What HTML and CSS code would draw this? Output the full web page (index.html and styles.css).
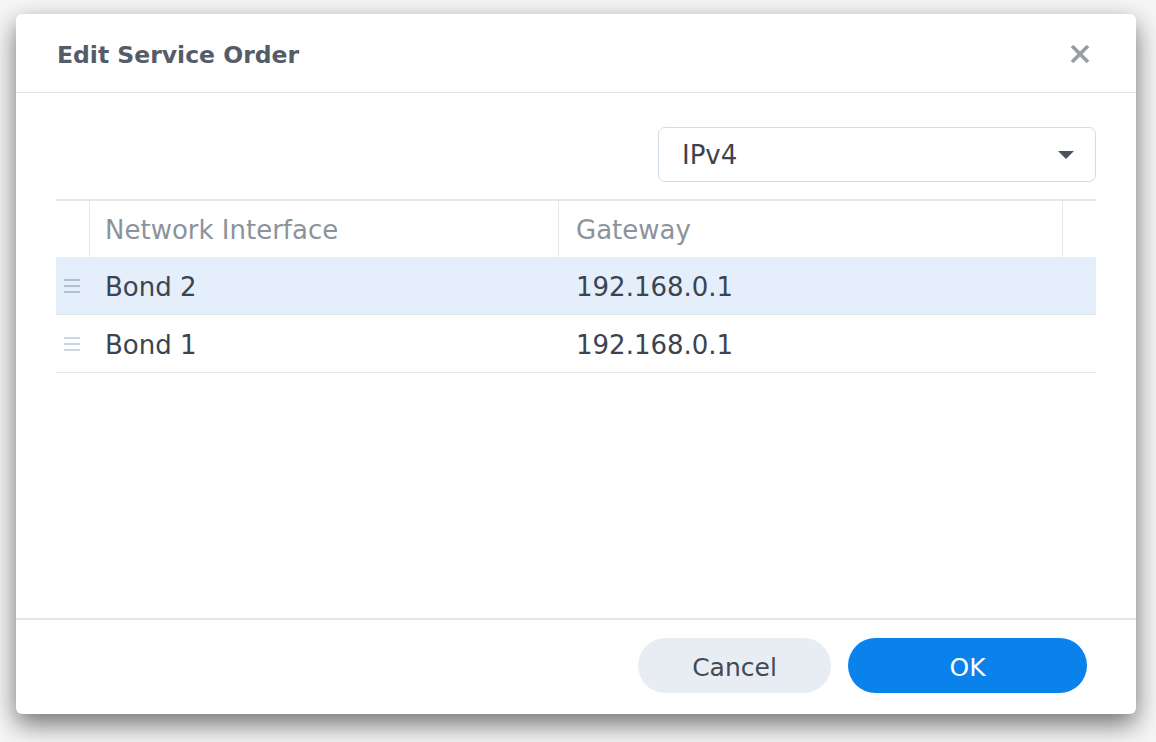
FILE: index.html
```html
<!DOCTYPE html>
<html lang="en">
<head>
<meta charset="utf-8">
<title>Edit Service Order</title>
<link rel="stylesheet" href="styles.css">
</head>
<body>
<div class="dialog">
  <div class="dlg-header">
    <h1 class="dlg-title">Edit Service Order</h1>
    <button class="close-btn" aria-label="Close">
      <svg width="20" height="20" viewBox="0 0 20 20"><path d="M2 2 L18 18 M18 2 L2 18" stroke="#9a9da3" stroke-width="3.6" stroke-linecap="butt" fill="none"/></svg>
    </button>
  </div>
  <div class="dlg-body">
    <div class="toolbar">
      <div class="select">
        <span class="select-value">IPv4</span>
        <svg class="caret" width="16" height="8" viewBox="0 0 16 8"><path d="M0 0 H16 L8 8 Z" fill="#4a5361"/></svg>
      </div>
    </div>
    <div class="grid">
      <div class="grid-row grid-head">
        <div class="cell c-handle"></div>
        <div class="cell c-name sep">Network Interface</div>
        <div class="cell c-gw sep">Gateway</div>
        <div class="cell c-pad sep"></div>
      </div>
      <div class="grid-row selected">
        <div class="cell c-handle"><span class="handle"><i></i><i></i><i></i></span></div>
        <div class="cell c-name">Bond 2</div>
        <div class="cell c-gw">192.168.0.1</div>
        <div class="cell c-pad"></div>
      </div>
      <div class="grid-row">
        <div class="cell c-handle"><span class="handle light"><i></i><i></i><i></i></span></div>
        <div class="cell c-name">Bond 1</div>
        <div class="cell c-gw">192.168.0.1</div>
        <div class="cell c-pad"></div>
      </div>
    </div>
  </div>
  <div class="dlg-footer">
    <button class="btn btn-cancel">Cancel</button>
    <button class="btn btn-ok">OK</button>
  </div>
</div>
</body>
</html>
```
FILE: styles.css
```css
* { box-sizing: border-box; }
html, body { margin: 0; padding: 0; }
body {
  width: 1156px;
  height: 742px;
  background: #f6f6f6;
  font-family: "DejaVu Sans", Verdana, sans-serif;
  overflow: hidden;
  padding: 14px 20px 0 16px;
}
.dialog {
  width: 1120px;
  height: 700px;
  background: #ffffff;
  border-radius: 6px;
  box-shadow: 0 10px 26px rgba(0, 0, 0, 0.55);
  display: flex;
  flex-direction: column;
}
.dlg-header {
  height: 79px;
  flex: none;
  border-bottom: 1px solid #e2e7ec;
  display: flex;
  align-items: center;
  justify-content: space-between;
  padding: 0 46px 0 41px;
}
.dlg-title {
  margin: 0;
  padding-top: 3px;
  font-size: 23.5px;
  font-weight: bold;
  color: #545c67;
}
.close-btn {
  border: 0;
  background: none;
  padding: 0;
  width: 20px;
  height: 20px;
  display: flex;
  margin-top: 1px;
}
.dlg-body {
  flex: 1;
  padding: 34px 40px 0 40px;
}
.toolbar {
  display: flex;
  justify-content: flex-end;
}
.select {
  width: 438px;
  height: 55px;
  border: 1px solid #d2dde7;
  border-radius: 7px;
  display: flex;
  align-items: center;
  justify-content: space-between;
  padding: 0 21px 0 23px;
}
.select-value {
  font-size: 26px;
  color: #3b4450;
}
.caret { display: block; }
.grid {
  margin-top: 17px;
}
.grid-row {
  display: grid;
  grid-template-columns: 33px 469px 504px 34px;
  height: 58px;
  border-bottom: 1px solid #e3e8ed;
  font-size: 26px;
  color: #3b4450;
}
.grid-head {
  border-top: 2px solid #e1e7ed;
  border-bottom: 0;
  color: #8c939b;
  height: 58px;
}
.grid-row.selected { background: #e4effb; border-bottom-color: #d9e3ec; }
.cell {
  display: flex;
  align-items: center;
  padding-top: 2px;
  white-space: nowrap;
}
.sep { border-left: 1px solid #e3e8ed; }
.c-name { padding-left: 16px; }
.c-gw { padding-left: 18px; }
.grid-head .c-name { padding-left: 15px; }
.grid-head .c-gw { padding-left: 17px; }
.c-handle { padding-left: 8px; padding-top: 0; }
.handle {
  display: flex;
  flex-direction: column;
  gap: 4px;
  width: 16px;
}
.handle i {
  display: block;
  height: 2px;
  background: #b3bfcc;
}
.handle.light i { background: #cad7e3; }
.dlg-footer {
  flex: none;
  height: 96px;
  border-top: 2px solid #e3e8ed;
  display: flex;
  justify-content: flex-end;
  align-items: flex-start;
  gap: 17px;
  padding: 18px 49px 0 0;
}
.btn {
  height: 55px;
  border: 0;
  border-radius: 28px;
  font-family: "DejaVu Sans", Verdana, sans-serif;
  font-size: 25px;
  padding: 3px 0 0 0;
}
.btn-cancel {
  width: 193px;
  background: #e8edf3;
  color: #414a55;
}
.btn-ok {
  width: 239px;
  background: #0a82eb;
  color: #ffffff;
}
```
